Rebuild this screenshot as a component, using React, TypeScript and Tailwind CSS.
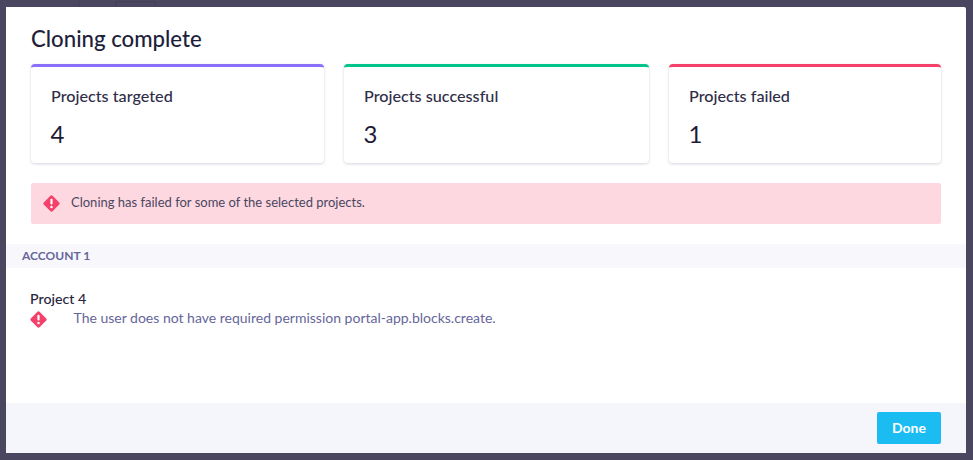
const font = { fontFamily: "Lato, 'Open Sans', sans-serif" };

function ErrorDiamond({ className = "" }: { className?: string }) {
  return (
    <svg width="17" height="17" viewBox="0 0 17 17" className={`shrink-0 ${className}`}>
      <path
        d="M7.2 1 1 7.2a1.8 1.8 0 0 0 0 2.6L7.2 16a1.8 1.8 0 0 0 2.6 0L16 9.8a1.8 1.8 0 0 0 0-2.6L9.8 1a1.8 1.8 0 0 0-2.6 0Z"
        fill="#f5406a"
      />
      <rect x="7.4" y="3.8" width="2.2" height="5.8" rx="1" fill="#fff" />
      <circle cx="8.5" cy="12" r="1.25" fill="#fff" />
    </svg>
  );
}

const stats = [
  { label: "Projects targeted", value: "4", border: "border-t-[#8b6ffa]" },
  { label: "Projects successful", value: "3", border: "border-t-[#00c58a]" },
  { label: "Projects failed", value: "1", border: "border-t-[#f5406a]" },
];

export default function App() {
  return (
    <div className="relative h-[460px] w-[973px] overflow-hidden bg-[#4b465f] pl-[6px] pt-[7px]" style={font}>
      {/* page behind the backdrop, just visible above the modal */}
      <div className="absolute left-[79px] top-0 h-[7px] w-px bg-[#46415a]" />
      <div className="absolute left-[115px] top-[1px] h-[8px] w-[41px] rounded-t-[2px] border border-[#433e56]" />

      <div className="relative flex h-[446px] w-[960px] flex-col rounded-tr-[2px] bg-white">
        <h1 className="mt-[16px] pl-[25px] text-[22.2px] leading-[32px] font-medium text-[#201e3a]">Cloning complete</h1>

        <div className="mt-[9px] grid grid-cols-[293px_305px_272px] gap-5 pl-[25px]">
          {stats.map((s) => (
            <div
              key={s.label}
              className={`h-[99px] rounded-[4px] border-t-[3px] bg-white pl-5 pt-[17px] shadow-[0_1px_3px_rgba(50,45,90,0.2)] ${s.border}`}
            >
              <div className="text-[16.2px] leading-[24px] font-medium text-[#2f2d48]">{s.label}</div>
              <div className="mt-[11px] -ml-[0.5px] text-[24px] leading-[30px] text-[#1d1b36]">{s.value}</div>
            </div>
          ))}
        </div>

        <div className="mt-5 ml-[25px] flex h-[41px] w-[910px] items-center gap-[11px] rounded-[2px] bg-[#fdd8e0] pb-px pl-[12px] text-[13px] text-[#4a4760]">
          <ErrorDiamond />
          <span>Cloning has failed for some of the selected projects.</span>
        </div>

        <div className="mt-5 flex h-6 items-center bg-[#f8f7fc] pl-4 text-[12px] font-bold text-[#66669a]">ACCOUNT 1</div>

        <div className="mt-[21px] pl-6 text-[14.2px] leading-[20px] font-medium text-[#26243e]">Project 4</div>
        <div className="flex items-center pl-6 text-[14px] leading-[20px] text-[#66669a]">
          <ErrorDiamond />
          <span className="ml-[26.5px] -translate-y-px">The user does not have required permission portal-app.blocks.create.</span>
        </div>

        <div className="mt-auto flex h-[50px] items-center justify-end bg-[#f5f6fb] pr-[25px]">
          <button className="h-8 w-16 rounded-[2px] bg-[#1abcf2] pb-0.5 text-[14px] font-bold text-white">Done</button>
        </div>
      </div>
    </div>
  );
}
